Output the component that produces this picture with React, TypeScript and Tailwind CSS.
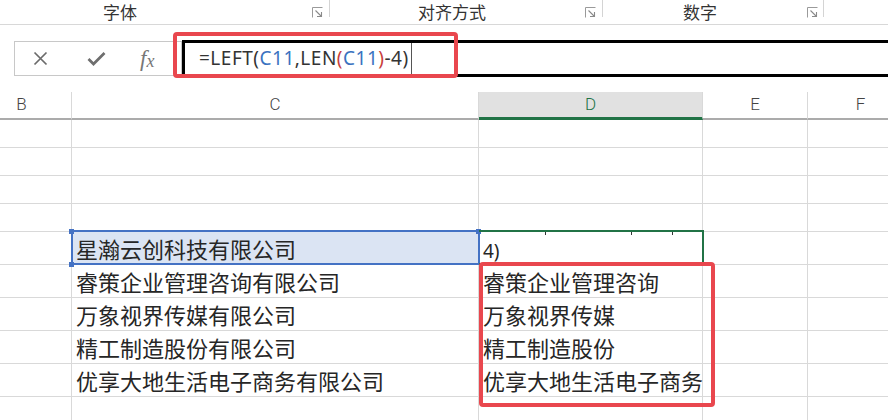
import React from "react";

const cjk = { fontFamily: '"Noto Sans CJK SC", "Noto Sans", sans-serif' };

function Launcher() {
  return (
    <svg width="11" height="11" viewBox="0 0 11 11" className="mt-[7px] shrink-0">
      <path d="M0.5 10.5 V0.5 H10.5" fill="none" stroke="#9a9a9a" strokeWidth="1" />
      <path d="M3.5 3.5 L9.5 9.5" fill="none" stroke="#8a8a8a" strokeWidth="1.1" />
      <path d="M9.5 5 V9.5 H5" fill="none" stroke="#8a8a8a" strokeWidth="1.1" />
    </svg>
  );
}

const widths = ["w-[100px] ml-[-28px]", "w-[407px]", "w-[224px]", "w-[105px]", "w-[106px]"];

function EmptyRow() {
  return (
    <div className="flex h-[28px]">
      {widths.map((w, i) => (
        <div key={i} className={`${w} shrink-0 border-r border-b border-[#d9d9d9]`} />
      ))}
    </div>
  );
}

function DataRow({ c, d }: { c: string; d: string }) {
  return (
    <div className="flex h-[33px] text-[22px] text-[#262626]" style={cjk}>
      <div className="w-[100px] ml-[-28px] shrink-0 border-r border-b border-[#d9d9d9]" />
      <div className="w-[407px] shrink-0 border-r border-b border-[#d9d9d9] flex items-center pl-[4px] leading-none whitespace-nowrap">
        {c}
      </div>
      <div className="w-[224px] shrink-0 border-r border-b border-[#d9d9d9] flex items-center pl-[4px] leading-none whitespace-nowrap">
        {d}
      </div>
      <div className="w-[105px] shrink-0 border-r border-b border-[#d9d9d9]" />
      <div className="w-[106px] shrink-0 border-r border-b border-[#d9d9d9]" />
    </div>
  );
}

export default function App() {
  return (
    <div className="relative w-[888px] h-[420px] overflow-hidden bg-white">
      {/* Ribbon group labels */}
      <div className="flex h-[25px] border-b border-[#d8d8d8] text-[17px] text-[#333]" style={cjk}>
        <div className="w-[240px] shrink-0 text-center leading-[23px]">字体</div>
        <div className="ml-[72px] flex">
          <Launcher />
        </div>
        <div className="ml-[6px] w-px h-[17px] bg-[#d4d4d4]" />
        <div className="w-[244px] shrink-0 text-center leading-[23px]">对齐方式</div>
        <div className="ml-[11px] flex">
          <Launcher />
        </div>
        <div className="ml-[6px] w-px h-[17px] bg-[#d4d4d4]" />
        <div className="w-[194px] shrink-0 text-center leading-[23px]">数字</div>
        <div className="ml-[10px] flex">
          <Launcher />
        </div>
        <div className="ml-[5px] w-px h-[17px] bg-[#d4d4d4]" />
      </div>

      {/* Formula bar */}
      <div className="flex items-start h-[67px] pt-[15px]">
        <div className="ml-[14px] mt-[1px] w-[168px] h-[35px] shrink-0 border border-[#c8c8c8] bg-white flex items-center">
          <svg width="15" height="15" viewBox="0 0 15 15" className="ml-[18px]">
            <path d="M1.5 1.5 L13.5 13.5 M13.5 1.5 L1.5 13.5" stroke="#6b6b6b" strokeWidth="1.7" fill="none" />
          </svg>
          <svg width="19" height="15" viewBox="0 0 19 15" className="ml-[39px]">
            <path d="M1.5 8 L6.5 13 L17.5 2" stroke="#6e6e6e" strokeWidth="2.7" fill="none" strokeLinejoin="miter" />
          </svg>
          <div
            className="ml-[34px] text-[#777] italic leading-none flex items-end"
            style={{ fontFamily: '"Liberation Serif", serif' }}
          >
            <span className="text-[23px]">f</span>
            <span className="text-[18px]">x</span>
          </div>
        </div>
        <div className="flex-1 mr-[-20px] h-[37px] border-[3px] border-black bg-white flex items-center pl-[14px]">
          <span
            className="text-[19px] tracking-[0.5px] text-[#333] leading-none whitespace-nowrap"
            style={{ fontFamily: '"Noto Sans", sans-serif' }}
          >
            =LEFT(<span className="text-[#3a72c0]">C11</span>,LEN
            <span className="text-[#c8403c]">(</span>
            <span className="text-[#3a72c0]">C11</span>
            <span className="text-[#c8403c]">)</span>-4)
          </span>
          <div className="ml-[2px] w-px h-[31px] bg-[#555]" />
        </div>
      </div>

      {/* Column headers */}
      <div
        className="flex h-[28px] text-[17px] text-[#444] font-light"
        style={{ fontFamily: 'Roboto, "Noto Sans", sans-serif' }}
      >
        <div className="w-[100px] ml-[-28px] shrink-0 border-r border-[#d9d9d9] border-b-2 border-b-[#ababab] flex items-center justify-center">B</div>
        <div className="w-[407px] shrink-0 border-r border-[#d9d9d9] border-b-2 border-b-[#ababab] flex items-center justify-center">C</div>
        <div className="w-[224px] shrink-0 border-r border-[#d9d9d9] bg-[#e1e1e1] border-b-[3px] border-b-[#217346] text-[#217346] flex items-center justify-center">D</div>
        <div className="w-[105px] shrink-0 border-r border-[#d9d9d9] border-b-2 border-b-[#ababab] flex items-center justify-center">E</div>
        <div className="w-[106px] shrink-0 border-r border-[#d9d9d9] border-b-2 border-b-[#ababab] flex items-center justify-center">F</div>
      </div>

      <EmptyRow />
      <EmptyRow />
      <EmptyRow />
      <EmptyRow />

      {/* First data row (selected/edit) */}
      <div className="flex h-[33px] text-[22px] text-[#262626]" style={cjk}>
        <div className="w-[100px] ml-[-28px] shrink-0 border-r border-b border-[#d9d9d9]" />
        <div className="relative w-[407px] shrink-0 border-r border-b border-[#d9d9d9] bg-[#dbe4f3] flex items-center pl-[4px] leading-none whitespace-nowrap">
          星瀚云创科技有限公司
          <div className="absolute top-[-2px] left-[-1px] right-[-2px] bottom-[-1px] border-2 border-[#4472c4]" />
          <div className="absolute top-[-3px] left-[-3px] w-[5px] h-[5px] bg-[#4472c4]" />
          <div className="absolute bottom-[-3px] left-[-3px] w-[5px] h-[5px] bg-[#4472c4]" />
          <div className="absolute top-[-3px] right-[-3px] w-[5px] h-[5px] bg-[#4472c4]" />
        </div>
        <div className="relative w-[224px] shrink-0 border-r border-b border-[#d9d9d9] flex items-end pb-[3px] pl-[4px] leading-none">
          <span className="text-[19px]" style={{ fontFamily: '"Noto Sans", sans-serif' }}>4)</span>
          <div className="absolute top-[-2px] left-0 right-[-2px] bottom-[-1px] border-t-2 border-r-2 border-b-2 border-[#217346]" />
          <div className="absolute top-0 left-[66px] w-px h-[3px] bg-[#333]" />
          <div className="absolute top-0 left-[152px] w-px h-[3px] bg-[#333]" />
          <div className="absolute top-0 left-[193px] w-px h-[3px] bg-[#333]" />
        </div>
        <div className="w-[105px] shrink-0 border-r border-b border-[#d9d9d9]" />
        <div className="w-[106px] shrink-0 border-r border-b border-[#d9d9d9]" />
      </div>

      <DataRow c="睿策企业管理咨询有限公司" d="睿策企业管理咨询" />
      <DataRow c="万象视界传媒有限公司" d="万象视界传媒" />
      <DataRow c="精工制造股份有限公司" d="精工制造股份" />
      <DataRow c="优享大地生活电子商务有限公司" d="优享大地生活电子商务" />
      <div className="flex h-[33px]">
        {widths.map((w, i) => (
          <div key={i} className={`${w} shrink-0 border-r border-b border-[#d9d9d9]`} />
        ))}
      </div>

      {/* Annotation boxes */}
      <div className="absolute left-[173px] top-[32px] w-[285px] h-[46px] border-4 border-[#e9474e] rounded-[4px]" />
      <div className="absolute left-[479px] top-[262px] w-[236px] h-[145px] border-4 border-[#e9474e] rounded-[4px]" />
    </div>
  );
}
